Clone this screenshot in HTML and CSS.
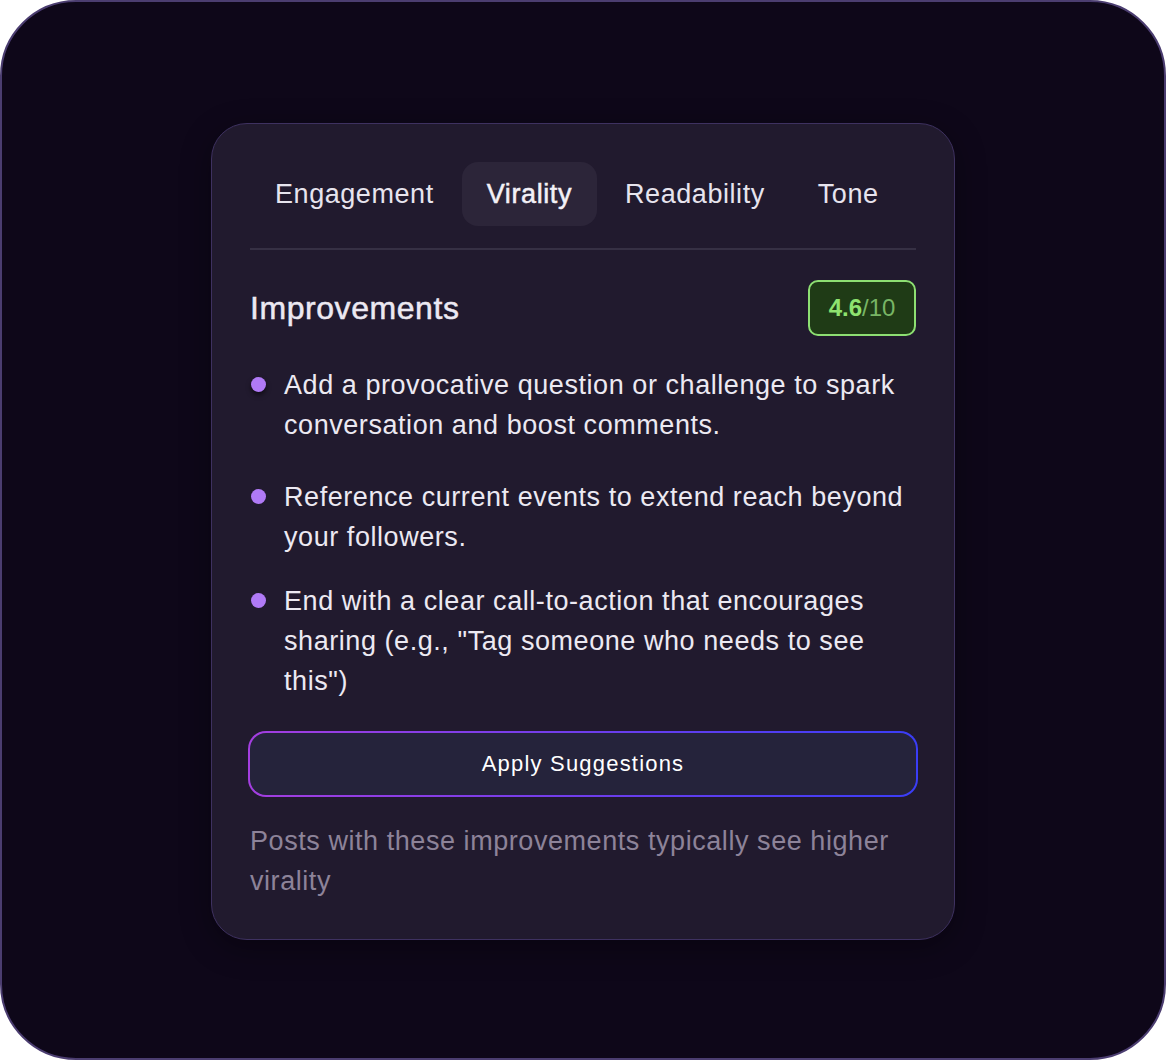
FILE: index.html
```html
<!DOCTYPE html>
<html lang="en">
<head>
    <meta charset="UTF-8" />
    <meta name="viewport" content="width=device-width, initial-scale=1.0" />
    <title>Post Insights</title>
    <link rel="stylesheet" href="styles.css">
</head>
<body>
    <div class="frame">
        <div class="card">
            <nav class="tabs">
                <span class="tab">Engagement</span>
                <span class="tab active">Virality</span>
                <span class="tab">Readability</span>
                <span class="tab">Tone</span>
            </nav>

            <div class="header">
                <h2>Improvements</h2>
                <span class="score"><b>4.6</b>/10</span>
            </div>

            <ul class="tips">
                <li class="first">Add a provocative question or challenge to spark conversation and boost comments.</li>
                <li>Reference current events to extend reach beyond your followers.</li>
                <li>End with a clear call-to-action that encourages sharing (e.g., "Tag someone who needs to see this")</li>
            </ul>

            <button class="apply">Apply Suggestions</button>

            <p class="note">Posts with these improvements typically see higher virality</p>
        </div>
    </div>
</body>
</html>
```

FILE: styles.css
```css
* {
    box-sizing: border-box;
}

body {
    margin: 0;
    background: #ffffff;
    font-family: "Liberation Sans", Arial, sans-serif;
    letter-spacing: 0.035em;
}

.frame {
    width: 1166px;
    height: 1060px;
    padding-top: 3px;
    background: #0e0719;
    border: 2px solid #4b3d70;
    border-radius: 76px;
    display: flex;
    align-items: center;
    justify-content: center;
}

.card {
    width: 744px;
    background: #211a2e;
    border: 1px solid #3e3160;
    border-radius: 36px;
    padding: 38px;
    box-shadow: 0 8px 30px rgba(0, 0, 0, 0.35);
    color: #ece9f2;
}

.tabs {
    display: flex;
    gap: 3px;
    padding-bottom: 22px;
    border-bottom: 2px solid #363044;
}

.tab {
    font-size: 27px;
    line-height: 64px;
    padding: 0 25px;
    border-radius: 16px;
    color: #e7e4ee;
}

.tab.active {
    background: #2c2539;
    color: #f3f1f7;
    letter-spacing: 0.6px;
    -webkit-text-stroke: 0.5px #f3f1f7;
}

.header {
    display: flex;
    justify-content: space-between;
    align-items: center;
    margin: 30px 0 29px;
}

.header h2 {
    margin: 0;
    font-size: 32px;
    font-weight: normal;
    -webkit-text-stroke: 0.5px #ece9f2;
    color: #ece9f2;
}

.score {
    width: 108px;
    height: 56px;
    display: flex;
    align-items: center;
    justify-content: center;
    border: 2px solid #8ddf72;
    border-radius: 10px;
    background: #1f3b16;
    color: #78b565;
    font-size: 24px;
    letter-spacing: 0;
}

.score b {
    color: #8ee36f;
}

.tips {
    list-style: none;
    margin: 0;
    padding: 0;
}

.tips li {
    position: relative;
    padding-left: 34px;
    font-size: 27px;
    line-height: 40px;
    margin-bottom: 24px;
    color: #ece9f2;
}

.tips li.first {
    margin-bottom: 32px;
}

.tips li::before {
    content: "";
    position: absolute;
    left: 1px;
    top: 12px;
    width: 15px;
    height: 15px;
    border-radius: 50%;
    background: #b07af6;
}

.tips li.first::before {
    box-shadow: 0 3px 5px rgba(0, 0, 0, 0.55);
}

.apply {
    display: block;
    width: calc(100% + 4px);
    margin: 30px -2px 24px;
    height: 66px;
    border: 2px solid transparent;
    border-radius: 18px;
    background:
        linear-gradient(#25233b, #25233b) padding-box,
        linear-gradient(90deg, #a43ee0, #3a3df7) border-box;
    color: #ffffff;
    font-family: inherit;
    font-size: 22px;
    letter-spacing: 1.2px;
}

.note {
    margin: 0;
    font-size: 27px;
    line-height: 40px;
    color: #8d8399;
}
```
